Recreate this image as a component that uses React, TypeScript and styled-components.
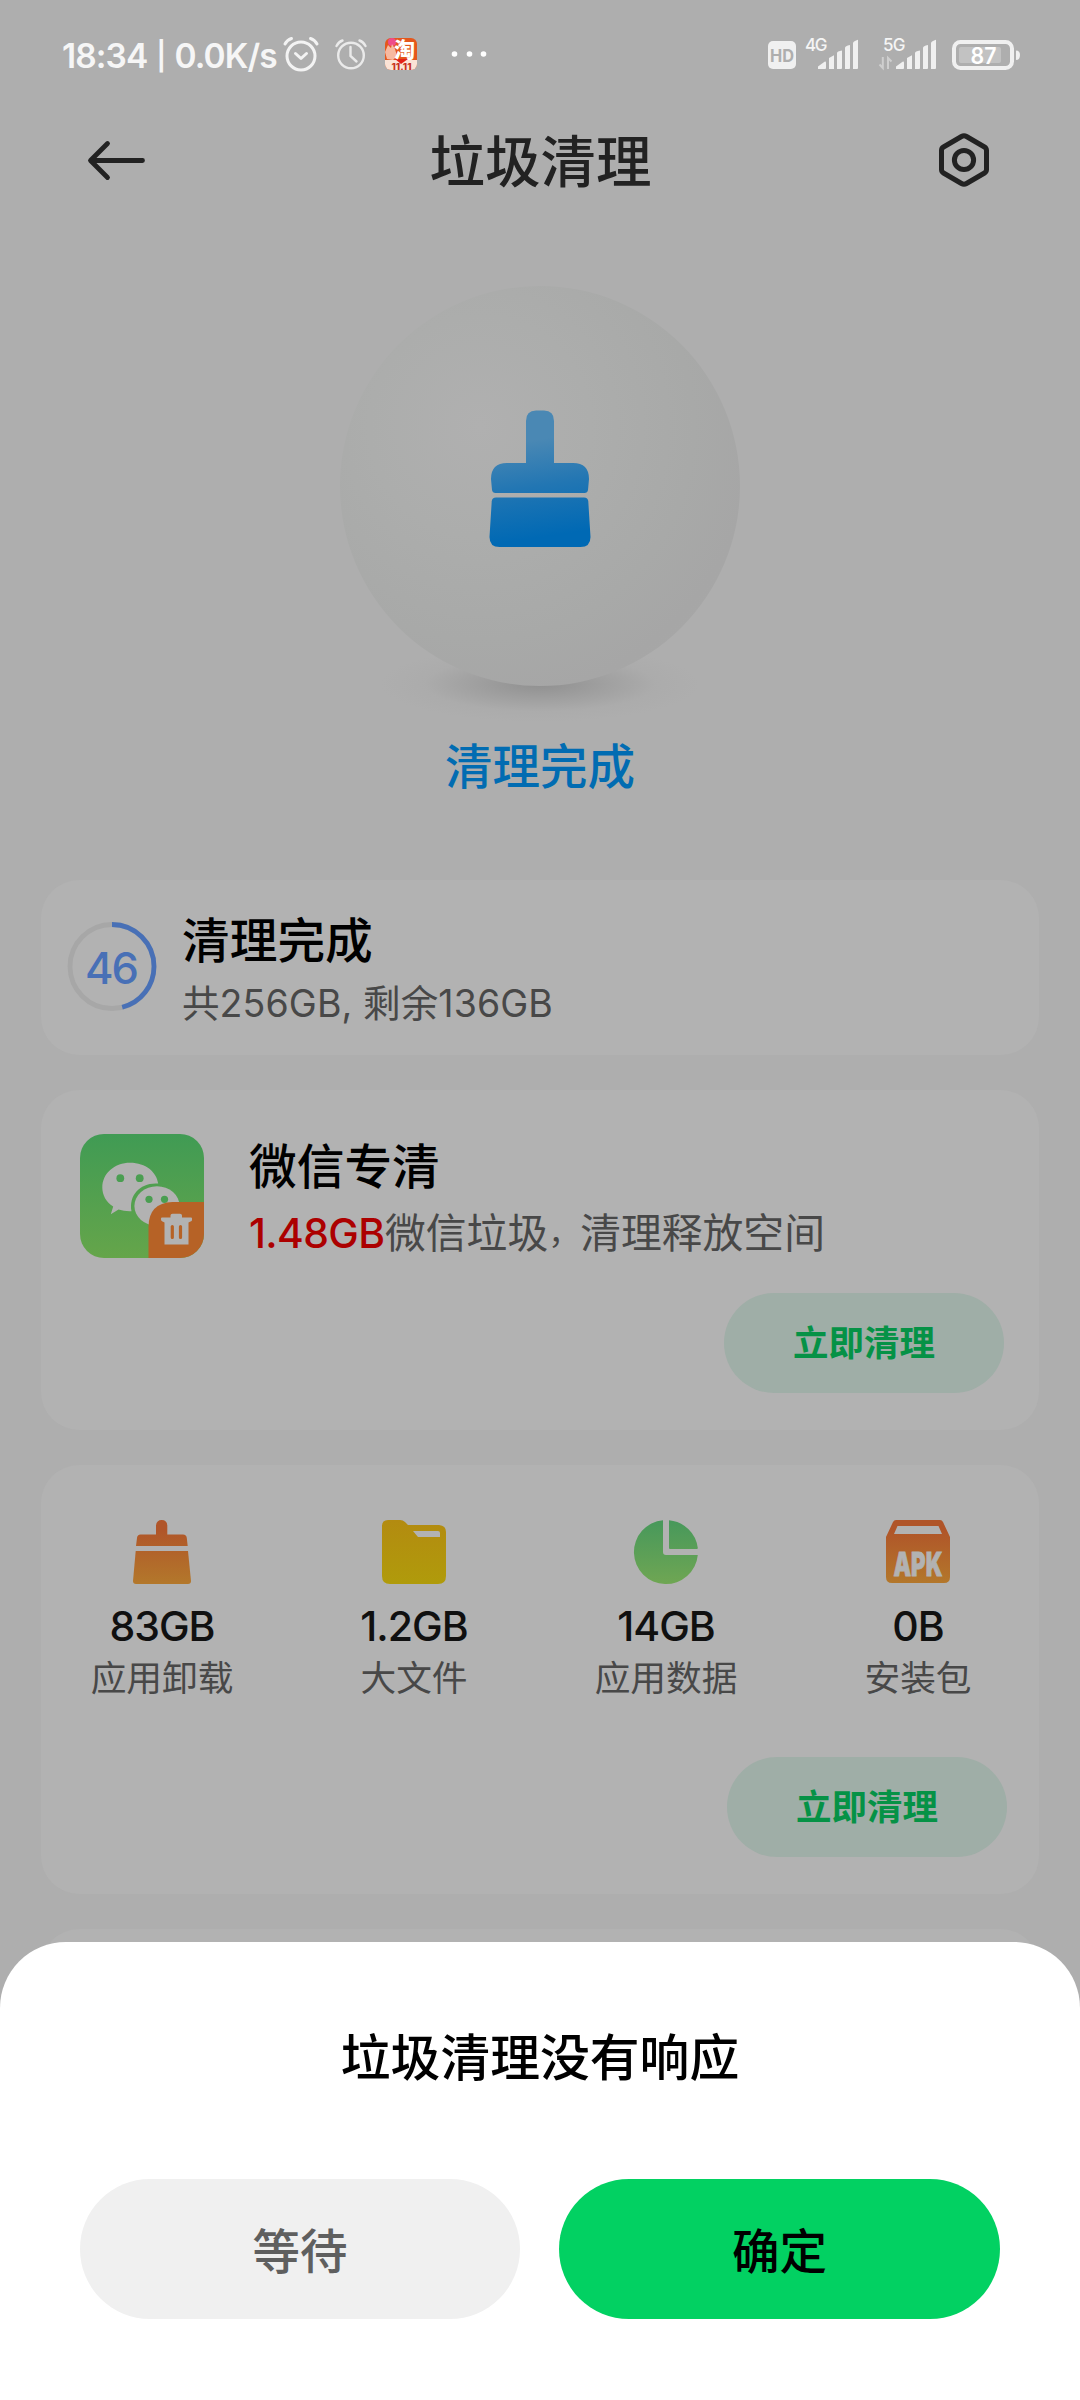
import React from "react";
import styled, { createGlobalStyle } from "styled-components";

const GlobalStyle = createGlobalStyle`
  * { box-sizing: border-box; }
  body { margin: 0; background: #aeaeae; }
  button { border: 0; padding: 0; font: inherit; }
`;

const Page = styled.div`
  position: relative;
  display: flex;
  flex-direction: column;
  width: 1080px;
  height: 2400px;
  overflow: hidden;
  background: #aeaeae;
  font-family: Inter, "Noto Sans CJK SC", sans-serif;
`;

const Glyph = styled.svg`
  display: block;
  flex: none;
  overflow: visible;
`;

/* status bar */
const StatusBar = styled.div`
  display: flex;
  justify-content: space-between;
  align-items: center;
  height: 110px;
  padding: 0 60px 0 62px;
  color: #f6f6f6;
`;

const StatusGroup = styled.div`
  display: flex;
  align-items: center;
`;

const Clock = styled.div`
  display: flex;
  align-items: center;
  width: 221px;
  font-size: 33.5px;
  line-height: 40px;
  padding-top: 2px;
  font-weight: 600;
  letter-spacing: -0.9px;
  white-space: pre;
`;

const ClockBar = styled.span`
  width: 27px;
  font-size: 28px;
  text-align: center;
`;

/* header */
const Header = styled.header`
  display: flex;
  align-items: center;
  justify-content: space-between;
  height: 100px;
  padding: 0 88px;
`;

const Title = styled.h1`
  margin: 0;
  padding-top: 4px;
  font-size: 55.5px;
  line-height: 80px;
  font-weight: 500;
  color: #222;
`;

/* hero */
const Hero = styled.section`
  display: flex;
  flex-direction: column;
  align-items: center;
  height: 670px;
  padding-top: 76px;
`;

const Orb = styled.div`
  position: relative;
  display: flex;
  justify-content: center;
  width: 400px;
  height: 400px;
  padding-top: 124px;

  &::before {
    content: "";
    position: absolute;
    left: 40px;
    right: 40px;
    bottom: -36px;
    height: 76px;
    background: radial-gradient(closest-side, #909090, rgba(152, 152, 152, 0.65) 40%, rgba(166, 166, 166, 0.3) 72%, rgba(174, 174, 174, 0));
  }

  &::after {
    content: "";
    position: absolute;
    inset: 0;
    border-radius: 50%;
    background: radial-gradient(circle at 35% 35%, #b0b0b0 0%, #acadac 30%, #a8a9a8 58%, #a6a6a6 75%, #a9aaa9 100%);
  }

  svg {
    position: relative;
    z-index: 1;
  }
`;

const Caption = styled.div`
  margin-top: 51px;
  font-size: 47.5px;
  line-height: 60px;
  font-weight: 500;
  color: #016cb2;
`;

/* cards */
const Cards = styled.main`
  display: flex;
  flex-direction: column;
  gap: 35px;
  padding: 0 41px;
`;

const Card = styled.section<{ $h: number }>`
  display: flex;
  flex-direction: column;
  flex: none;
  height: ${(p) => p.$h}px;
  border-radius: 38px;
  background: #b2b2b2;
`;

const StorageRow = styled.div`
  display: flex;
  gap: 24px;
  padding: 32px 26px 0;
`;

const Ring = styled.div`
  display: grid;
  place-items: center;
  width: 91px;
  height: 91px;
  margin-top: 9px;

  > * { grid-area: 1 / 1; }
`;

const RingValue = styled.span`
  padding: 2px 3px 0 0;
  font-size: 43.5px;
  line-height: 48px;
  font-weight: 500;
  letter-spacing: -2px;
  color: #4870b6;
`;

const TextBlock = styled.div<{ $offset?: number }>`
  display: flex;
  flex-direction: column;
  padding-top: ${(p) => p.$offset ?? 0}px;
`;

const CardTitle = styled.h2`
  margin: 0;
  font-size: 47.7px;
  line-height: 58px;
  font-weight: 500;
  color: #000;
`;

const StorageText = styled.p`
  margin: 5px 0 0;
  font-size: 37.5px;
  line-height: 58px;
  color: #484848;
  white-space: pre;
  letter-spacing: 0.1px;
`;

const WechatRow = styled.div`
  display: flex;
  gap: 45px;
  height: 168px;
  padding: 44px 39px 0;
`;

const WechatText = styled.p`
  display: flex;
  margin: 7px 0 0;
  font-size: 40.8px;
  line-height: 60px;
  color: #484848;
  white-space: nowrap;
`;

const Amount = styled.span`
  width: 136px;
  letter-spacing: -0.6px;
  font-weight: 500;
  color: #ac0000;
`;

const Comma = styled.span`
  width: 32px;
  font-size: 32px;
`;

const CleanButton = styled.button<{ $right: number }>`
  align-self: flex-end;
  width: 280px;
  height: 100px;
  margin: auto ${(p) => p.$right}px 37px 0;
  padding-top: 2px;
  border-radius: 50px;
  background: #9faea7;
  color: #059246;
  font-size: 35.5px;
  font-weight: 700;
  line-height: 98px;
`;

const Stats = styled.div`
  display: grid;
  grid-template-columns: repeat(4, 252px);
  margin: 55px -5px 0;
`;

const Stat = styled.div`
  display: flex;
  flex-direction: column;
  align-items: center;
`;

const StatValue = styled.div`
  margin-top: 17px;
  font-size: 41px;
  line-height: 50px;
  font-weight: 500;
  letter-spacing: -1px;
  color: #101010;
`;

const StatLabel = styled.div`
  margin-top: 2px;
  font-size: 35.7px;
  line-height: 50px;
  color: #484848;
`;

/* bottom dialog */
const Sheet = styled.div`
  position: absolute;
  left: 0;
  right: 0;
  bottom: 0;
  display: flex;
  flex-direction: column;
  align-items: center;
  height: 458px;
  padding: 86px 80px 0;
  border-radius: 66px 66px 0 0;
  background: #fff;
`;

const SheetTitle = styled.h3`
  margin: 0;
  font-size: 49.8px;
  line-height: 60px;
  font-weight: 500;
  color: #000;
`;

const Actions = styled.div`
  display: grid;
  grid-template-columns: 440px 441px;
  gap: 39px;
  width: 920px;
  margin-top: 91px;
`;

const Action = styled.button<{ $primary?: boolean }>`
  height: 140px;
  padding-top: 6px;
  border-radius: 70px;
  font-size: 47.5px;
  line-height: 134px;
  font-weight: 500;
  background: ${(p) => (p.$primary ? "#02d162" : "#f0f0f0")};
  color: ${(p) => (p.$primary ? "#000" : "#5f5f5f")};
`;

const StatusLeftIcons = () => (
  <Glyph width="206" height="40" viewBox="283 36 206 40" fill="none" stroke="#f3f3f3" strokeLinecap="round">
    <g strokeWidth="3">
      <circle cx="301" cy="57" r="14" />
      <path d="M295.5 54.5L301 59.5L306.5 54.5" strokeLinejoin="round" />
      <path d="M285 45Q287 41 291.500 39.500M317 45Q315 41 310.500 39.500" />
    </g>
    <g strokeWidth="2.4" stroke="#eaeaea">
      <circle cx="351" cy="56.500" r="12.800" />
      <path d="M350.500 48V57L356.500 62.500" />
      <path d="M336.500 47Q339 42.500 342.500 41.500M365.500 47Q363 42.500 359.500 41.500" />
    </g>
    <g stroke="none">
      <clipPath id="tb"><rect x="385" y="39" width="32" height="32" rx="6" /></clipPath>
      <g clipPath="url(#tb)">
        <rect x="385" y="39" width="32" height="32" fill="#e4571d" />
        <rect x="385" y="61" width="32" height="10" fill="#fbe3d6" />
        <circle cx="392" cy="43" r="4" fill="#ee4c8a" />
        <path d="M388 46L391 49L392 45L395 50L397 57L393 61L387 60L385 53Z" fill="#f7b9a0" />
        <path d="M395 60L401 65L408 60Z" fill="#e32118" />
        <text x="394" y="58" fontSize="21" fontWeight="900" fill="#fff">淘</text>
        <text x="391.500" y="70.500" fontSize="8.500" fontWeight="800" fill="#c8321e" textLength="20" lengthAdjust="spacingAndGlyphs">11.11</text>
      </g>
      <g fill="#fff">
        <circle cx="454.500" cy="55" r="2.800" />
        <circle cx="469.500" cy="55" r="2.800" />
        <circle cx="483.500" cy="55" r="2.800" />
      </g>
    </g>
  </Glyph>
);

const Bars = ({ x }: { x: number }) => (
  <g transform={`translate(${x} 0)`} fill="#f0f0f0">
    <path d="M0 69V66.500L6.500 61.800Q8 61 8 62.800V68Q8 69 7 69Z" />
    <path d="M11 69V58L16 55.300V69Z" />
    <path d="M19 69V53Q19 51.500 24 50.600V68Q24 69 23 69Z" />
    <path d="M27 69V48Q27 46 32 45V68Q32 69 31 69Z" />
    <path d="M35 69V43Q35.500 41 40 39.800V68Q40 69 39 69Z" />
  </g>
);

const StatusRightIcons = () => (
  <Glyph width="252" height="40" viewBox="768 35 252 40" fontWeight="500">
    <rect x="768" y="41" width="28" height="28" rx="5" fill="#f0f0f0" />
    <text x="770" y="61.500" fontSize="17" fontWeight="700" fill="#aeaeae" textLength="24" lengthAdjust="spacingAndGlyphs">HD</text>
    <text x="805" y="50.500" fontSize="17" fill="#f5f5f5" textLength="22.500">4G</text>
    <Bars x={818} />
    <text x="883" y="50.500" fontSize="17" fill="#f5f5f5" textLength="22.500">5G</text>
    <path d="M882.800 57V68L879.500 64.500M888 69V58L891.500 61.500" fill="none" stroke="#cfcfcf" strokeWidth="2" />
    <Bars x={896} />
    <rect x="954" y="42" width="58" height="26" rx="6.500" fill="none" stroke="#f0f0f0" strokeWidth="4" />
    <rect x="959" y="47" width="42" height="16" rx="2" fill="#c2c2c2" />
    <path d="M1016 50.500Q1020 50.500 1020 55Q1020 60 1016 60Z" fill="#f0f0f0" />
    <text x="970.500" y="64" fontSize="23" fontWeight="600" fill="#fff" textLength="26" lengthAdjust="spacingAndGlyphs">87</text>
  </Glyph>
);

const BackIcon = () => (
  <Glyph width="57" height="40" viewBox="88 140 57 40" fill="none" stroke="#222" strokeWidth="4.800" strokeLinecap="round" strokeLinejoin="round">
    <path d="M142.500 160.500H91M107.500 143.500L90.500 160.500L107.500 177.500" />
  </Glyph>
);

const SettingsIcon = () => (
  <Glyph width="56" height="56" viewBox="936 132 56 56" fill="none" stroke="#222" strokeWidth="5" strokeLinejoin="round">
    <path d="M961.500 136.500Q964 135 966.500 136.500L984.500 147Q986.500 148.200 986.500 150.500V169.500Q986.500 171.800 984.500 173L966.500 183.500Q964 185 961.500 183.500L943.500 173Q941.500 171.800 941.500 169.500V150.500Q941.500 148.200 943.500 147Z" />
    <circle cx="964" cy="160" r="9.600" />
  </Glyph>
);

const BroomIcon = () => (
  <Glyph width="102" height="137" viewBox="489 410 102 137">
    <defs>
      <linearGradient id="broom" x1="530" y1="410" x2="550" y2="547" gradientUnits="userSpaceOnUse">
        <stop offset="0.220" stopColor="#4a88b4" />
        <stop offset="0.550" stopColor="#2276b3" />
        <stop offset="0.920" stopColor="#0069b4" />
      </linearGradient>
    </defs>
    <g fill="url(#broom)">
      <path d="M526 463V421Q526 410.500 536 410.500H544Q554 410.500 554 421V463H573Q589 463 589 479L588 490Q587.500 493 584.500 493H495.500Q492.500 493 492 490L491 479Q491 463 507 463Z" />
      <path d="M496 497.500H584Q588 497.500 588.300 501.500L590.500 537Q590.500 547 580.500 547H499.500Q489.500 547 489.500 537L491.700 501.500Q492 497.500 496 497.500Z" />
    </g>
  </Glyph>
);

const RingIcon = () => {
  const length = 2 * Math.PI * 42;
  return (
    <Glyph width="91" height="91" viewBox="0 0 91 91" fill="none" strokeWidth="4.800">
      <circle cx="45" cy="45.500" r="42" stroke="#a7a7a7" />
      <circle cx="45" cy="45.500" r="42" stroke="#4870b6" strokeDasharray={`${length * 0.46} ${length}`} transform="rotate(-90 45 45.500)" />
    </Glyph>
  );
};

const WechatIcon = () => (
  <Glyph width="124" height="124" viewBox="0 0 124 124">
    <defs>
      <linearGradient id="wx" x1="0" y1="0" x2="0" y2="1">
        <stop offset="0" stopColor="#409b54" />
        <stop offset="1" stopColor="#65a54a" />
      </linearGradient>
      <clipPath id="wxClip"><rect width="124" height="124" rx="24" /></clipPath>
    </defs>
    <g clipPath="url(#wxClip)">
      <rect width="124" height="124" fill="url(#wx)" />
      <path d="M50 28.700C66 28.700 76.500 38 78.200 49.500C61 48 48.500 60.500 51.500 77.200Q44.500 77.500 38.500 75.600L30.800 80.200L33.200 72.500C26 68 22.300 61 22.300 53.500C22.300 39 35 28.700 50 28.700Z" fill="#b2b2b2" />
      <ellipse cx="77" cy="72" rx="22.600" ry="19.800" fill="#b2b2b2" />
      <g fill="#4a9e51">
        <circle cx="40.300" cy="44.200" r="3.900" />
        <circle cx="59.700" cy="44.200" r="3.900" />
        <circle cx="69" cy="65.300" r="3.600" />
        <circle cx="84.500" cy="65.300" r="3.600" />
      </g>
      <path d="M124 68H92.500Q68.500 69 68.500 93V124H124Z" fill="#b66226" />
      <path d="M82 83.500H90.500V81.500Q90.500 79.800 92.500 79.800H100Q102 79.800 102 81.500V83.500H111Q112 83.500 112 84.500V86Q112 87.300 110.500 87.500L108.500 88.500V110.500H84.500V88.500L82.500 87.500Q81 87 81 85.500V84.500Q81 83.500 82 83.500Z" fill="#b2b2b2" />
      <path d="M92.300 92.500V103.500M100.500 92.500V103.500" stroke="#b66226" strokeWidth="3.200" strokeLinecap="round" />
    </g>
  </Glyph>
);

const WarmGradient = ({ id }: { id: string }) => (
  <linearGradient id={id} x1="0" y1="0" x2="0" y2="64" gradientUnits="userSpaceOnUse">
    <stop offset="0.150" stopColor="#b05529" />
    <stop offset="1" stopColor="#b3782b" />
  </linearGradient>
);

const UninstallIcon = () => (
  <Glyph width="64" height="64" viewBox="0 0 64 64">
    <defs><WarmGradient id="warmBrush" /></defs>
    <g fill="url(#warmBrush)">
      <path d="M26 14V5.500Q26.500 0 31.700 0Q37 0 37.300 5.500V14.500H53Q56.500 14.500 56.800 18L57.700 26H6L7 18Q7.300 14.500 10.500 14.500H26Z" />
      <path d="M5.700 31H58L61 61Q61 64 58 64H6Q3 64 3 61Z" />
    </g>
  </Glyph>
);

const FolderIcon = () => (
  <Glyph width="64" height="64" viewBox="0 0 64 64">
    <defs>
      <linearGradient id="fold" x1="0" y1="0" x2="0" y2="1">
        <stop offset="0" stopColor="#b38b10" />
        <stop offset="1" stopColor="#b09b0b" />
      </linearGradient>
    </defs>
    <path fillRule="evenodd" fill="url(#fold)" d="M6 0H18Q21 0 23 2L26 5H57Q64 5.500 64 12V56Q64 64 56 64H8Q0 64 0 56V6Q0 0 6 0ZM31 11L36 17H58V13Q58 11 56 11Z" />
  </Glyph>
);

const PieIcon = () => (
  <Glyph width="64" height="64" viewBox="0 0 64 64">
    <defs>
      <linearGradient id="pie" x1="0" y1="0" x2="0" y2="64" gradientUnits="userSpaceOnUse">
        <stop offset="0" stopColor="#47985b" />
        <stop offset="1" stopColor="#6fa653" />
      </linearGradient>
    </defs>
    <g fill="url(#pie)">
      <path d="M29 0.200V32Q29 35 32 35H63.800A32 32 0 1 1 29 0.200Z" />
      <path d="M35 0.200A32 32 0 0 1 63.800 28Q63.800 29 62.800 29H36Q35 29 35 28Z" />
    </g>
  </Glyph>
);

const ApkIcon = () => (
  <Glyph width="64" height="64" viewBox="0 0 64 64">
    <defs><WarmGradient id="warmApk" /></defs>
    <path fillRule="evenodd" fill="url(#warmApk)" d="M10 0H54Q56 0 57 2L64 17V57Q64 63 58 63H6Q0 63 0 57V17L7 2Q8 0 10 0ZM11.500 6L8 14H56L52.500 6Z" />
    <text x="7.500" y="55.500" fontSize="33" fontWeight="900" fill="#b2b2b2" stroke="#b2b2b2" strokeWidth="0.800" textLength="49" lengthAdjust="spacingAndGlyphs">APK</text>
  </Glyph>
);

const stats = [
  { icon: <UninstallIcon />, value: "83GB", label: "应用卸载" },
  { icon: <FolderIcon />, value: "1.2GB", label: "大文件" },
  { icon: <PieIcon />, value: "14GB", label: "应用数据" },
  { icon: <ApkIcon />, value: "0B", label: "安装包" },
];

export default function App() {
  return (
    <Page lang="zh-CN">
      <GlobalStyle />
      <StatusBar>
        <StatusGroup>
          <Clock>
            <span>18:34</span>
            <ClockBar>|</ClockBar>
            <span>0.0K/s</span>
          </Clock>
          <StatusLeftIcons />
        </StatusGroup>
        <StatusRightIcons />
      </StatusBar>
      <Header>
        <BackIcon />
        <Title>垃圾清理</Title>
        <SettingsIcon />
      </Header>
      <Hero>
        <Orb><BroomIcon /></Orb>
        <Caption>清理完成</Caption>
      </Hero>
      <Cards>
        <Card $h={175}>
          <StorageRow>
            <Ring>
              <RingIcon />
              <RingValue>46</RingValue>
            </Ring>
            <TextBlock>
              <CardTitle>清理完成</CardTitle>
              <StorageText>共256GB, 剩余136GB</StorageText>
            </TextBlock>
          </StorageRow>
        </Card>
        <Card $h={340}>
          <WechatRow>
            <WechatIcon />
            <TextBlock $offset={4}>
              <CardTitle>微信专清</CardTitle>
              <WechatText>
                <Amount>1.48GB</Amount>
                <span>微信垃圾</span>
                <Comma>，</Comma>
                <span>清理释放空间</span>
              </WechatText>
            </TextBlock>
          </WechatRow>
          <CleanButton $right={35}>立即清理</CleanButton>
        </Card>
        <Card $h={429}>
          <Stats>
            {stats.map((s) => (
              <Stat key={s.label}>
                {s.icon}
                <StatValue>{s.value}</StatValue>
                <StatLabel>{s.label}</StatLabel>
              </Stat>
            ))}
          </Stats>
          <CleanButton $right={32}>立即清理</CleanButton>
        </Card>
        <Card $h={429} />
      </Cards>
      <Sheet role="dialog">
        <SheetTitle>垃圾清理没有响应</SheetTitle>
        <Actions>
          <Action>等待</Action>
          <Action $primary>确定</Action>
        </Actions>
      </Sheet>
    </Page>
  );
}
